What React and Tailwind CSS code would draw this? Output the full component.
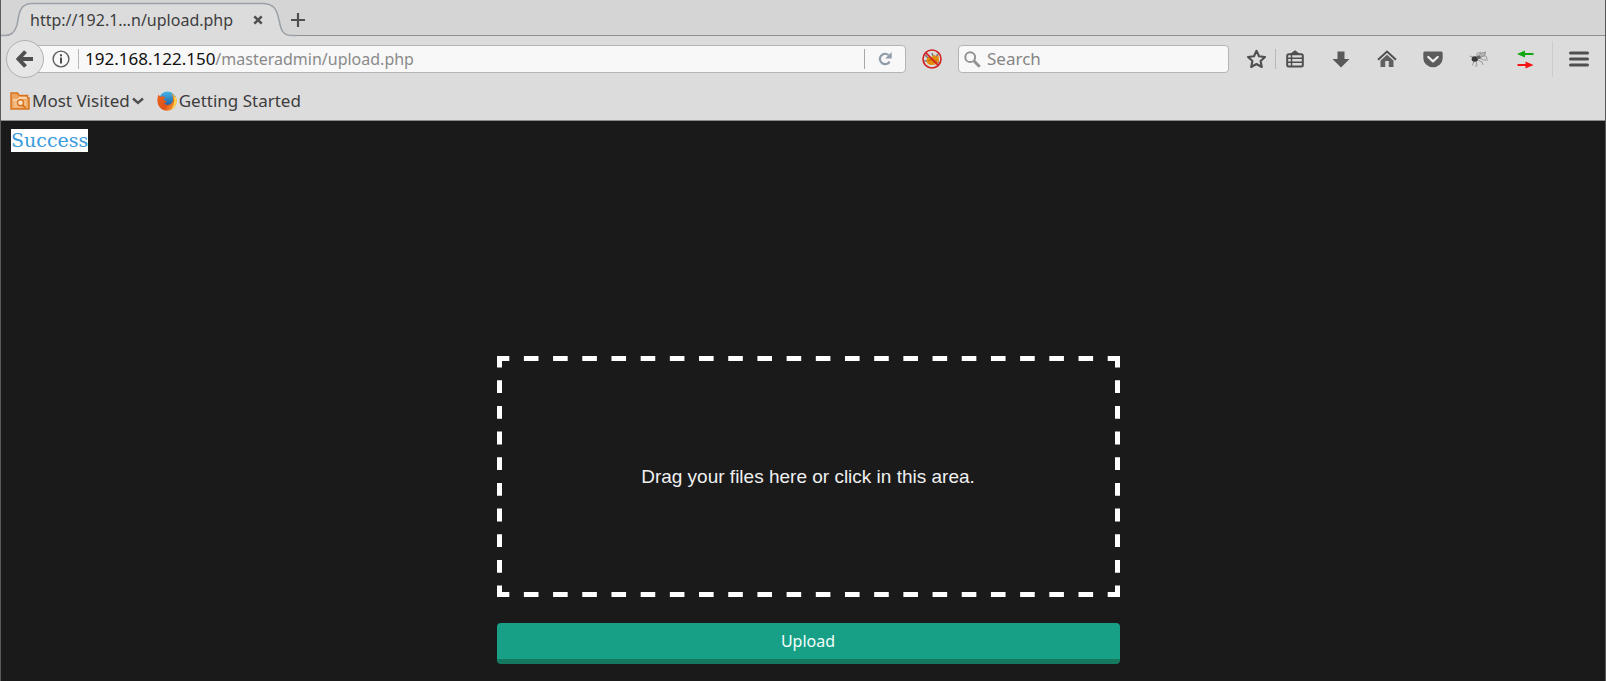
const ICON = '#4f4f4f';

function TabShape() {
  return (
    <svg className="absolute left-0 top-0" width="296" height="37" viewBox="0 0 296 37" fill="none" aria-hidden="true">
      <path
        d="M0 35.5H4C11 35.5 14 32 16 25C18 15 18 3.500 31 3.500H261C275 3.500 276 12 278 20C280 30 281 35.500 292 35.500H296V37H0Z"
        fill="#dcdcdc"
      />
      <path
        d="M0 35.5H4C11 35.5 14 32 16 25C18 15 18 3.5 31 3.5H261C275 3.5 276 12 278 20C280 30 281 35.5 292 35.5H296"
        stroke="#9aa0a6"
        strokeWidth="1.5"
      />
    </svg>
  );
}

function TabBar() {
  return (
    <div className="relative flex h-9 items-center border-b border-[#8f8f8f] bg-[#d5d5d5]">
      <TabShape />
      <div className="relative flex w-[281px] items-center pl-[29px] pt-1">
        <span className="w-[216px] whitespace-nowrap">http://192.1…n/upload.php</span>
        <button type="button" aria-label="Close tab" className="flex size-6 items-center justify-center">
          <svg width="10" height="10" viewBox="0 0 10 10" aria-hidden="true">
            <path d="M1.300 1.300L8.700 8.700M8.700 1.300L1.300 8.700" stroke={ICON} strokeWidth="2.600" />
          </svg>
        </button>
      </div>
      <button type="button" aria-label="New tab" className="relative mt-1 flex size-8 items-center justify-center">
        <svg width="16" height="16" viewBox="0 0 16 16" aria-hidden="true">
          <path d="M8 1V15M1 8H15" stroke={ICON} strokeWidth="2.200" />
        </svg>
      </button>
    </div>
  );
}

function AddressBar() {
  return (
    <div className="flex flex-1 items-center">
      <button
        type="button"
        aria-label="Back"
        className="z-10 flex size-[38px] shrink-0 items-center justify-center rounded-full border border-[#b0b0b0] bg-[#e6e6e6]"
      >
        <svg width="18" height="18" viewBox="0 0 18 18" fill="none" aria-hidden="true">
          <path d="M9.500 1.500L2.500 9L9.500 16.500M3 9H17" stroke={ICON} strokeWidth="4" strokeLinejoin="miter" />
        </svg>
      </button>
      <div className="-ml-3 flex h-7 flex-1 items-center rounded-r-sm border border-[#b4b4b4] bg-[#f8f8f8] pl-[19px]">
        <button type="button" aria-label="Site information" className="flex shrink-0">
          <svg width="18" height="18" viewBox="0 0 18 18" fill="none" aria-hidden="true">
            <circle cx="9" cy="9" r="7.900" stroke="#5c5c5c" strokeWidth="1.400" />
            <rect x="8" y="7.500" width="2" height="6" fill="#4a4a4a" />
            <rect x="8" y="4.300" width="2" height="2" fill="#4a4a4a" />
          </svg>
        </button>
        <span className="ml-2 h-5 w-px bg-[#b8b8b8]" />
        <a href="#" className="ml-[6px] flex-1 whitespace-nowrap text-[#8a8a8a]">
          <span className="text-[17px] text-[#111]">192.168.122.150</span>/masteradmin/upload.php
        </a>
        <span className="h-5 w-px bg-[#a8a8a8]" />
        <button type="button" aria-label="Reload" className="flex w-10 items-center justify-center">
          <svg width="14" height="14" viewBox="0 0 14 14" fill="none" aria-hidden="true">
            <path d="M10.500 3A5.200 5.200 0 1 0 11.600 9.600" stroke="#8f9ca8" strokeWidth="2.200" />
            <path d="M13.700 0V6.500H7.200Z" fill="#8f9ca8" />
          </svg>
        </button>
      </div>
    </div>
  );
}

function BlockedIcon() {
  return (
    <svg width="20" height="20" viewBox="0 0 20 20" fill="none" aria-hidden="true">
      <path d="M3 6L6 9M10 4L11 7M16 5L14 8M2 12L5 12M17 14L15 12" stroke="#777" strokeWidth="1.500" />
      <path d="M4.500 10L7 7.500L10 8L12.500 5.500L14 7.500L16.500 6.500L17 12L14 15.500L8 16L5 14Z" fill="#e58a0c" />
      <path d="M6 12L9 10.500L12 13L15 11" stroke="#b96a08" strokeWidth="1" />
      <circle cx="10" cy="10" r="9" stroke="#d42020" strokeWidth="1.600" />
      <path d="M3.600 3.600L16.400 16.400" stroke="#d42020" strokeWidth="1.600" />
    </svg>
  );
}

function SearchBox() {
  return (
    <label className="flex h-7 w-[271px] items-center gap-[6px] rounded-sm border border-[#b4b4b4] bg-[#f8f8f8] pl-[5px]">
      <svg className="shrink-0" width="17" height="17" viewBox="0 0 17 17" fill="none" aria-hidden="true">
        <circle cx="6.200" cy="6.200" r="4.900" stroke="#929292" strokeWidth="2" />
        <path d="M10 10L15.700 15.700" stroke="#929292" strokeWidth="3" />
      </svg>
      <input
        type="text"
        aria-label="Search"
        placeholder="Search"
        className="w-full min-w-0 bg-transparent text-[17px] outline-none placeholder:text-[#858585]"
      />
    </label>
  );
}

function ToolButton({ label, children }) {
  return (
    <button type="button" aria-label={label} className="flex h-8 w-[46px] shrink-0 items-center justify-center">
      {children}
    </button>
  );
}

function NavBar() {
  return (
    <div className="flex h-[46px] items-center bg-[#dcdcdc] pl-[5px]">
      <AddressBar />
      <div className="flex w-[52px] justify-center">
        <button type="button" aria-label="Scripts blocked">
          <BlockedIcon />
        </button>
      </div>
      <SearchBox />
      <button type="button" aria-label="Bookmark this page" className="ml-[15px] flex w-6 justify-center">
        <svg width="21" height="20" viewBox="0 0 21 20" fill="none" aria-hidden="true">
          <path
            d="M10.500 1.800L13 7.300L19 8L14.600 12L15.800 18L10.500 15L5.200 18L6.400 12L2 8L8 7.300Z"
            stroke={ICON}
            strokeWidth="2.100"
            strokeLinejoin="round"
          />
        </svg>
      </button>
      <span className="ml-[7px] h-5 w-px bg-[#b8b8b8]" />
      <div className="-ml-1 flex">
        <ToolButton label="Show your bookmarks">
          <svg width="18" height="18" viewBox="0 0 18 18" fill="none" aria-hidden="true">
            <rect x="1.200" y="4.200" width="15.600" height="12.300" rx="1.500" stroke={ICON} strokeWidth="2" />
            <path d="M5 4L9 1L13 4Z" fill={ICON} stroke={ICON} strokeWidth="1.200" />
            <path d="M5.500 4V16M2 8.200H16M2 12.200H16" stroke={ICON} strokeWidth="1.500" />
          </svg>
        </ToolButton>
        <ToolButton label="Downloads">
          <svg width="18" height="17" viewBox="0 0 18 17" aria-hidden="true">
            <path d="M5.500 0.500H12.500V8H17.500L9 16.500L0.500 8H5.500Z" fill="#585858" />
          </svg>
        </ToolButton>
        <ToolButton label="Home">
          <svg width="20" height="18" viewBox="0 0 20 18" fill="none" aria-hidden="true">
            <path d="M1 9.700L10 1.500L19 9.700" stroke={ICON} strokeWidth="2" />
            <path d="M3.500 10.500L10 4.700L16.500 10.500V17H11.800V11H8.200V17H3.500Z" fill="#606060" />
          </svg>
        </ToolButton>
        <ToolButton label="Save to Pocket">
          <svg width="20" height="17" viewBox="0 0 20 17" fill="none" aria-hidden="true">
            <path d="M1.500 0.500H18.500Q19.700 0.500 19.700 2V7A9.700 9.300 0 0 1 0.300 7V2Q0.300 0.500 1.500 0.500Z" fill="#5c5c5c" />
            <path d="M5.300 6L10 10.300L14.700 6" stroke="#ececec" strokeWidth="2.300" strokeLinecap="round" strokeLinejoin="round" />
          </svg>
        </ToolButton>
        <ToolButton label="Firebug">
          <svg width="20" height="16" viewBox="0 0 20 16" fill="none" aria-hidden="true">
            <path d="M4 6L0.500 5M5 10L3.500 14.500M7 10L8 14.500L6 15.500M9 9L13 11L14 14M10 7L15 9L19 9M11 5L17 5L18 8M8 6L8 2.500L12 1" stroke="#888" strokeWidth="0.800" />
            <path d="M9 6L11 2.500L16.500 1L16 4L11 7Z" fill="#b4b4b4" stroke="#777" strokeWidth="0.600" />
            <ellipse cx="5.800" cy="8" rx="3.200" ry="2.700" fill="#383838" />
            <ellipse cx="9.700" cy="6.300" rx="2" ry="1.700" fill="#666" />
          </svg>
        </ToolButton>
        <ToolButton label="Proxy switch">
          <svg width="17" height="19" viewBox="0 0 17 19" aria-hidden="true">
            <path d="M0 4L8 0.500V3H16.500V5H8V7.500Z" fill="#12a812" />
            <path d="M16.500 15L8.500 11.500V14H0.500V16H8.500V18.500Z" fill="#f51212" />
          </svg>
        </ToolButton>
      </div>
      <span className="ml-1 h-9 w-px bg-[#cbcbcb]" />
      <div className="flex w-[52px] justify-center">
        <ToolButton label="Open menu">
          <svg width="20" height="16" viewBox="0 0 20 16" aria-hidden="true">
            <path d="M1.500 2H18.500M1.500 8H18.500M1.500 14H18.500" stroke={ICON} strokeWidth="3" strokeLinecap="round" />
          </svg>
        </ToolButton>
      </div>
    </div>
  );
}

function FolderIcon() {
  return (
    <svg width="20" height="18" viewBox="0 0 20 18" fill="none" aria-hidden="true">
      <path d="M1 17V1H7.500L9 3.500H17.500V6H19V17Z" fill="#eca561" stroke="#d9741c" strokeWidth="1.500" />
      <path d="M3 8H8L9.500 6H17" stroke="#fbe3c8" strokeWidth="1.400" />
      <rect x="3.500" y="8.500" width="13" height="7" fill="#f3bd85" />
      <circle cx="10.500" cy="10.800" r="3" fill="#fbe3c8" stroke="#d9741c" strokeWidth="1.400" />
      <path d="M12.500 13L15.500 16" stroke="#d9741c" strokeWidth="1.800" />
    </svg>
  );
}

function FirefoxIcon() {
  return (
    <svg width="20" height="20" viewBox="0 0 20 20" aria-hidden="true">
      <defs>
        <linearGradient id="flame" x1="0" y1="0.200" x2="1" y2="0.800">
          <stop offset="0" stopColor="#e8641b" />
          <stop offset="0.550" stopColor="#e2501a" />
          <stop offset="1" stopColor="#f9b233" />
        </linearGradient>
        <linearGradient id="globe" x1="0" y1="0" x2="0" y2="1">
          <stop offset="0" stopColor="#45b5e6" />
          <stop offset="1" stopColor="#184f94" />
        </linearGradient>
      </defs>
      <circle cx="10.500" cy="9" r="8.500" fill="url(#globe)" />
      <path
        d="M1.500 3.500L3.500 6Q4.500 5 6 5.500L8 6Q8 7.500 6.500 8.500Q7.500 10 9.700 10.200Q9 12.300 7 12.300Q10 15 13 13.300Q16.300 11.500 16 7.500Q15.800 4.500 14.500 2.500Q17 3.500 18 6.500L18.500 5Q20.500 9 19 13.500Q16.500 19.500 10 19.700Q3.500 19.300 1 13.500Q-0.500 8 1.500 3.500Z"
        fill="url(#flame)"
      />
      <path d="M14.500 2.500Q17 3.500 18 6.500L18.500 5Q20.500 9 19 13.500Q17.500 17 14.500 18.500Q18 13 17 8Q16.500 4.500 14.500 2.500Z" fill="#fbd34a" />
    </svg>
  );
}

function BookmarksBar() {
  return (
    <div className="flex h-[39px] items-center border-b border-[#8c8c8c] bg-[#dcdcdc] pl-[9px] text-[17px]">
      <button type="button" className="flex items-center gap-[2px]">
        <FolderIcon />
        Most Visited
        <svg width="12" height="8" viewBox="0 0 12 8" fill="none" aria-hidden="true">
          <path d="M1 1.500L6 6L11 1.500" stroke={ICON} strokeWidth="2.400" />
        </svg>
      </button>
      <a href="#" className="ml-[13px] flex items-center gap-[2px]">
        <FirefoxIcon />
        Getting Started
      </a>
    </div>
  );
}

function DropZone() {
  return (
    <label className="relative flex h-[241px] w-full cursor-pointer items-center justify-center font-['Liberation_Sans',Arial,sans-serif] text-[19px] text-[#f0f0f0]">
      <svg
        className="absolute inset-0 size-full"
        viewBox="0 0 623 241"
        preserveAspectRatio="none"
        fill="none"
        stroke="#fff"
        strokeWidth="5"
        aria-hidden="true"
      >
        <path d="M0 2.500H5M618 2.500H623M0 238.500H5M618 238.500H623" />
        <g strokeDasharray="1 1" strokeDashoffset="0.500">
          <path pathLength="42" d="M5 2.500H618" />
          <path pathLength="42" d="M5 238.500H618" />
          <path pathLength="18" d="M2.500 5V236" />
          <path pathLength="18" d="M620.500 5V236" />
        </g>
      </svg>
      Drag your files here or click in this area.
      <input type="file" multiple className="sr-only" />
    </label>
  );
}

export default function App() {
  return (
    <div className="flex min-h-screen flex-col border-x border-[#5a5a5a] bg-[#1a1a1a] font-['Noto_Sans','Open_Sans',sans-serif] text-base leading-6 text-[#3c3c3c]">
      <header>
        <TabBar />
        <NavBar />
        <BookmarksBar />
      </header>
      <main className="flex-1 pl-[10px] pt-2">
        <p className="mb-[204px] flex font-['DejaVu_Serif',serif] text-[19px] leading-[23px]">
          <span className="bg-white text-[#3a9bdc]">Success</span>
        </p>
        <form className="mx-auto flex w-full max-w-[623px] flex-col gap-[26px]" onSubmit={(e) => e.preventDefault()}>
          <DropZone />
          <button
            type="submit"
            className="h-[41px] w-full rounded border-b-[5px] border-[#14795f] bg-[#18a086] text-[#f2fffc]"
          >
            Upload
          </button>
        </form>
      </main>
    </div>
  );
}
